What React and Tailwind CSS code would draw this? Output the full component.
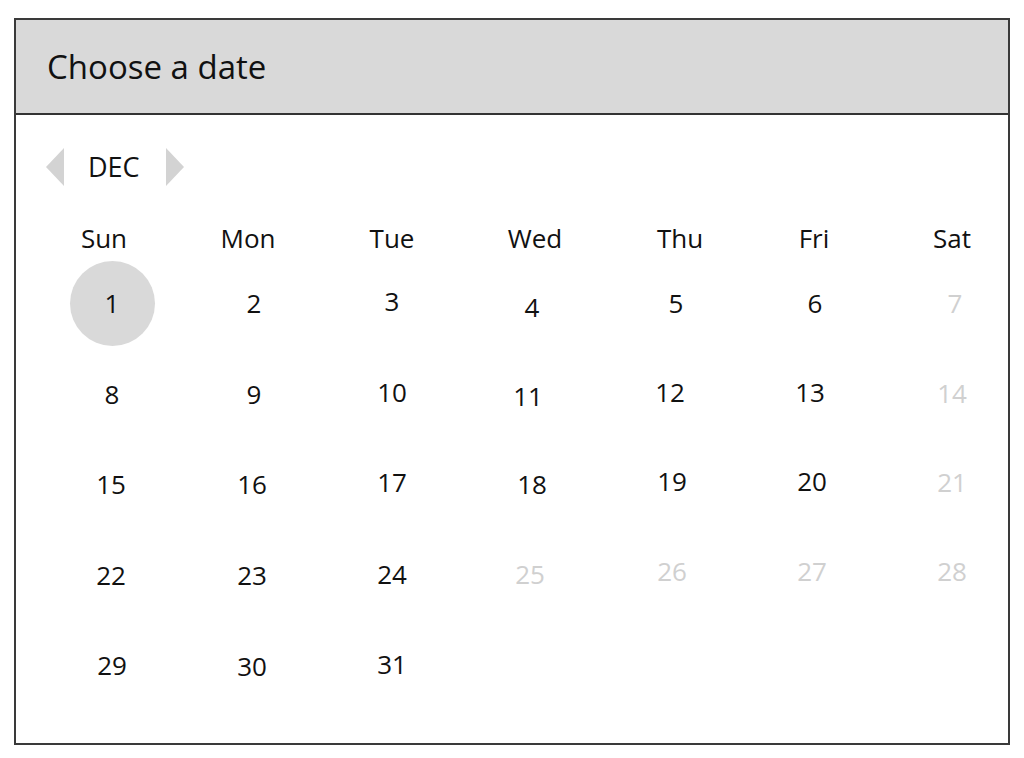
const FONT = { fontFamily: '"Open Sans", "Noto Sans", sans-serif' }

const DAYS = [
  { label: 'Sun', cls: 'pr-[16px]' },
  { label: 'Mon', cls: 'pr-[8px]' },
  { label: 'Tue', cls: '' },
  { label: 'Wed', cls: 'pl-[6px]' },
  { label: 'Thu', cls: 'pl-[16px]' },
  { label: 'Fri', cls: 'pl-[4px]' },
  { label: 'Sat', cls: '' },
]

// day numbers; muted ones are greyed out
const WEEKS = [
  [1, 2, 3, 4, 5, 6, 7],
  [8, 9, 10, 11, 12, 13, 14],
  [15, 16, 17, 18, 19, 20, 21],
  [22, 23, 24, 25, 26, 27, 28],
  [29, 30, 31, null, null, null, null],
]
const MUTED = [7, 14, 21, 25, 26, 27, 28]

// the mockup is hand placed, a few numbers sit a bit off the grid
const NUDGE = {
  1: 'pl-[2px]',
  2: 'pl-[4px]',
  3: 'pb-[4px]',
  4: 'pt-[8px]',
  5: 'pl-[8px]',
  6: 'pl-[6px]',
  7: 'pl-[6px]',
  8: 'pt-[2px]',
  9: 'pl-[4px] pt-[2px]',
  10: 'pb-[2px]',
  11: 'pt-[6px] pr-[8px]',
  12: 'pb-[2px] pr-[4px]',
  13: 'pb-[2px] pr-[4px]',
  15: 'pr-[2px] pt-[2px]',
  16: 'pt-[2px]',
  17: 'pb-[2px]',
  18: 'pt-[2px]',
  19: 'pb-[4px]',
  20: 'pb-[4px]',
  21: 'pb-[2px]',
  22: 'pr-[2px] pt-[4px]',
  23: 'pt-[4px]',
  24: 'pt-[2px]',
  25: 'pt-[2px] pr-[4px]',
  26: 'pb-[4px]',
  27: 'pb-[4px]',
  28: 'pb-[4px]',
  29: 'pt-[4px]',
  30: 'pt-[6px]',
  31: 'pt-[2px]',
}

function DayCell({ day, selected }) {
  if (!day) return <div className="h-[90px]" />
  const muted = MUTED.includes(day)
  return (
    <div className={`h-[90px] flex items-center justify-center ${selected ? '' : NUDGE[day] || ''}`}>
      <div
        className={`w-[85px] h-[85px] rounded-full flex items-center justify-center text-[26px] ${
          selected ? 'bg-[#d9d9d9]' : ''
        } ${muted ? 'text-[#d0d0d0]' : 'text-[#111]'}`}
      >
        {day}
      </div>
    </div>
  )
}

export default function App() {
  return (
    <div className="w-[1024px] h-[758px] bg-white pt-[18px] pl-[14px]" style={FONT}>
      <div className="w-[996px] h-[727px] border-2 border-[#3a3a3a] overflow-hidden flex flex-col">
        <div className="h-[95px] shrink-0 bg-[#d9d9d9] border-b-2 border-[#333] flex items-center pl-[31px]">
          <h1 className="text-[33px] text-[#111] leading-none">Choose a date</h1>
        </div>

        <div className="pt-[32px]">
          <div className="h-[40px] flex items-center pl-[30px]">
            <svg width="18" height="38" viewBox="0 0 18 38">
              <polygon points="18,0 0,19 18,38" fill="#d3d3d3" />
            </svg>
            <span className="text-[27px] text-[#111] ml-[24px] mr-[26px]">DEC</span>
            <svg width="18" height="38" viewBox="0 0 18 38">
              <polygon points="0,0 18,19 0,38" fill="#d3d3d3" />
            </svg>
          </div>

          <div className="ml-[26px] mt-[31px] grid grid-cols-[repeat(7,140px)]">
            {DAYS.map(d => (
              <div key={d.label} className={`h-[40px] flex items-center justify-center text-[26px] text-[#111] ${d.cls}`}>
                {d.label}
              </div>
            ))}
            {WEEKS.flat().map((day, i) => (
              <DayCell key={i} day={day} selected={day === 1} />
            ))}
          </div>
        </div>
      </div>
    </div>
  )
}
